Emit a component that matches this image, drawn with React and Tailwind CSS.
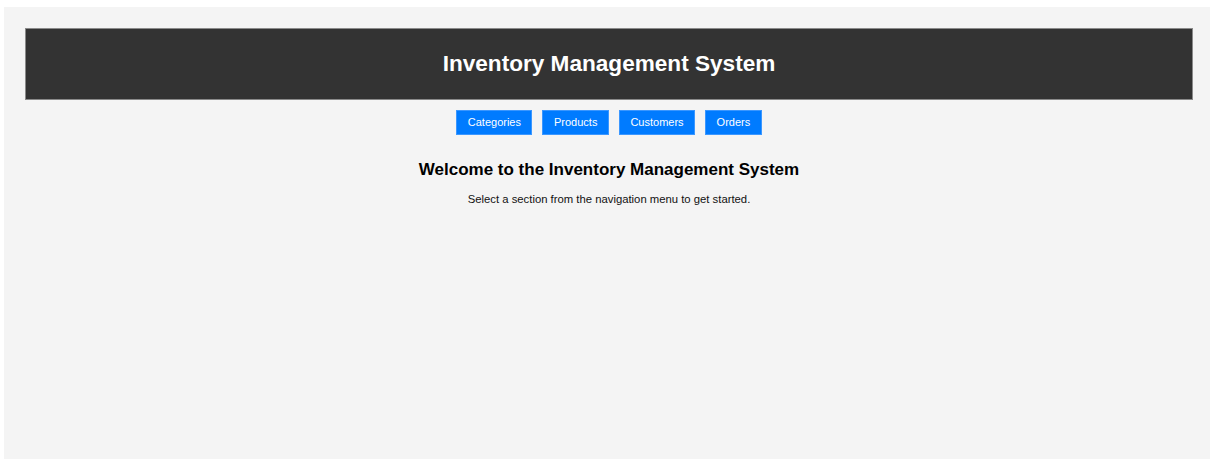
import React from "react";

const sections = ["Categories", "Products", "Customers", "Orders"];

const App = () => {
  return (
    <div className="w-[1210px] h-[462px] bg-white overflow-hidden" style={{ fontFamily: '"Liberation Sans", Arial, sans-serif' }}>
      <div className="ml-[4px] mt-[7px] h-[452px] w-[1206px] bg-[#f4f4f4] pl-[21px] pr-[17px] pt-[21px]">
        {/* Header */}
        <header className="h-[72px] bg-[#333333] border border-[#8a8a8a] flex items-center justify-center">
          <h1 className="text-white font-bold text-[22.6px] leading-none mt-[1px]">Inventory Management System</h1>
        </header>

        {/* Nav */}
        <nav className="flex justify-center gap-[10px] mt-[10px]">
          {sections.map((s) => (
            <button
              key={s}
              className="h-[25px] px-[10.5px] bg-[#007bff] text-white text-[11px] border border-[#3b97ff]"
            >
              {s}
            </button>
          ))}
        </nav>

        {/* Welcome */}
        <main className="text-center mt-[24px]">
          <h2 className="font-bold text-[17px] text-black leading-tight">Welcome to the Inventory Management System</h2>
          <p className="text-[11.3px] text-[#111] mt-[11px]">Select a section from the navigation menu to get started.</p>
        </main>
      </div>
    </div>
  );
};

export default App;
